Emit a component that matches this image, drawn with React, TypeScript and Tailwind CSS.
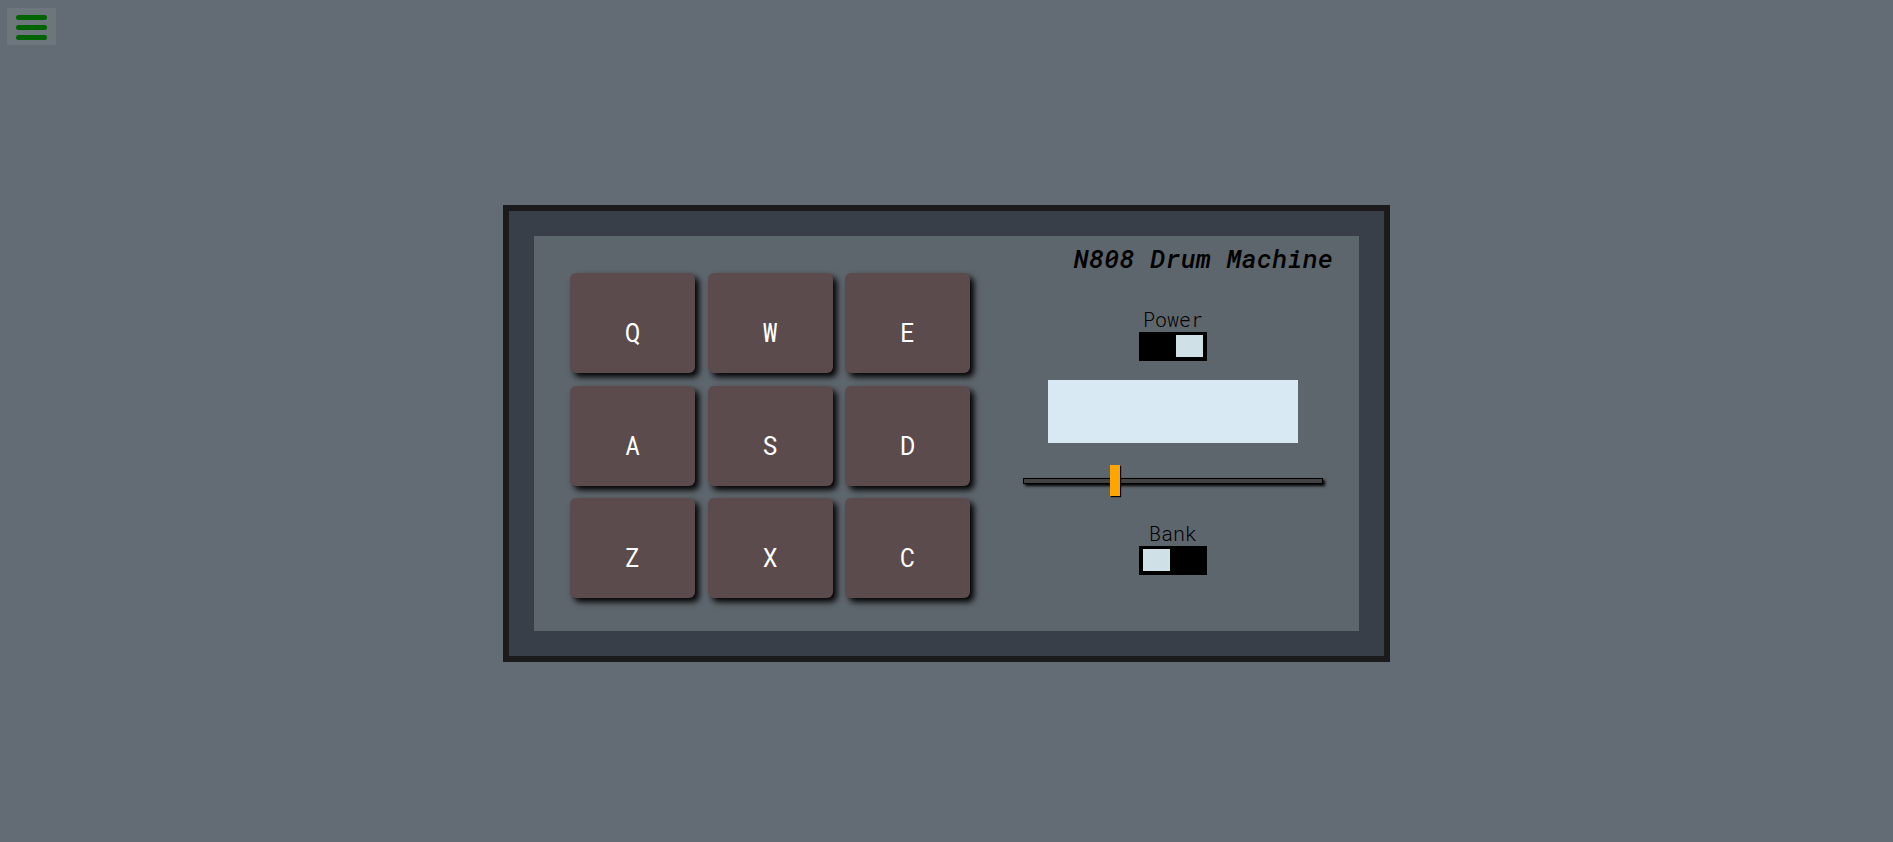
import { useState } from "react";

const PADS = ["Q", "W", "E", "A", "S", "D", "Z", "X", "C"];

function MenuButton() {
  return (
    <button
      type="button"
      aria-label="Menu"
      className="flex w-[49px] flex-col items-center gap-[5px] bg-[#6e767d] pt-[7px] pb-[5px]"
    >
      <span className="h-[5px] w-[31px] rounded-full bg-[#006400]" />
      <span className="h-[5px] w-[31px] rounded-full bg-[#006400]" />
      <span className="h-[5px] w-[31px] rounded-full bg-[#006400]" />
    </button>
  );
}

function Pad({ label }: { label: string }) {
  return (
    <button
      type="button"
      className="h-[100px] w-[125px] rounded-[6px] bg-[#5b4b4d] pt-[20px] text-[25px] leading-[30px] text-white shadow-[4px_4px_6px_#000]"
    >
      {label}
    </button>
  );
}

type SwitchProps = {
  label: string;
  checked: boolean;
  onChange: (value: boolean) => void;
};

function Switch({ label, checked, onChange }: SwitchProps) {
  return (
    <label className="flex flex-col items-center text-[20px] leading-[22px] font-light">
      {label}
      <input
        type="checkbox"
        checked={checked}
        onChange={(e) => onChange(e.target.checked)}
        className="mt-[2px] flex h-[29px] w-[68px] appearance-none bg-black px-[4px] pt-[3px] before:h-[22px] before:w-[27px] before:bg-[#cfe0e6] checked:justify-end"
      />
    </label>
  );
}

export default function App() {
  const [power, setPower] = useState(true);
  const [bank, setBank] = useState(false);
  const [volume, setVolume] = useState(30);

  return (
    <div className="flex min-h-screen flex-col bg-[#636b74] font-['Roboto_Mono','Liberation_Mono',monospace] text-black">
      <header className="flex pt-[8px] pl-[7px]">
        <MenuButton />
      </header>
      <main className="-mt-[20px] flex flex-1 items-center justify-center">
        <section className="border-[6px] border-[#1b1b1b] bg-[#393f49] p-[25px]">
          <div className="bg-[#5e666d] px-[36px] pb-[33px]">
            <h1 className="-mr-[10px] pt-[8px] text-right text-[26px] leading-[29px] font-medium italic">
              N808 Drum Machine
            </h1>
            <div className="flex gap-[53px]">
              <div className="grid h-[325px] w-[400px] grid-cols-[repeat(3,125px)] content-between justify-between">
                {PADS.map((pad) => (
                  <Pad key={pad} label={pad} />
                ))}
              </div>
              <div className="flex w-[300px] flex-col items-center pt-[35px]">
                <Switch label="Power" checked={power} onChange={setPower} />
                <output className="mt-[19px] block h-[63px] w-[250px] bg-[#d8e9f3]" />
                <input
                  type="range"
                  aria-label="Volume"
                  min={0}
                  max={100}
                  value={volume}
                  onChange={(e) => setVolume(Number(e.target.value))}
                  className="mt-[22px] h-[31px] w-full appearance-none bg-transparent [&::-webkit-slider-runnable-track]:h-[6px] [&::-webkit-slider-runnable-track]:border [&::-webkit-slider-runnable-track]:border-black [&::-webkit-slider-runnable-track]:bg-[#424242] [&::-webkit-slider-runnable-track]:shadow-[2px_2px_3px_#000] [&::-webkit-slider-thumb]:-mt-[14px] [&::-webkit-slider-thumb]:h-[31px] [&::-webkit-slider-thumb]:w-[10px] [&::-webkit-slider-thumb]:appearance-none [&::-webkit-slider-thumb]:bg-[#ffa500] [&::-webkit-slider-thumb]:shadow-[1px_1px_1px_#000]"
                />
                <div className="mt-[26px]">
                  <Switch label="Bank" checked={bank} onChange={setBank} />
                </div>
              </div>
            </div>
          </div>
        </section>
      </main>
    </div>
  );
}
